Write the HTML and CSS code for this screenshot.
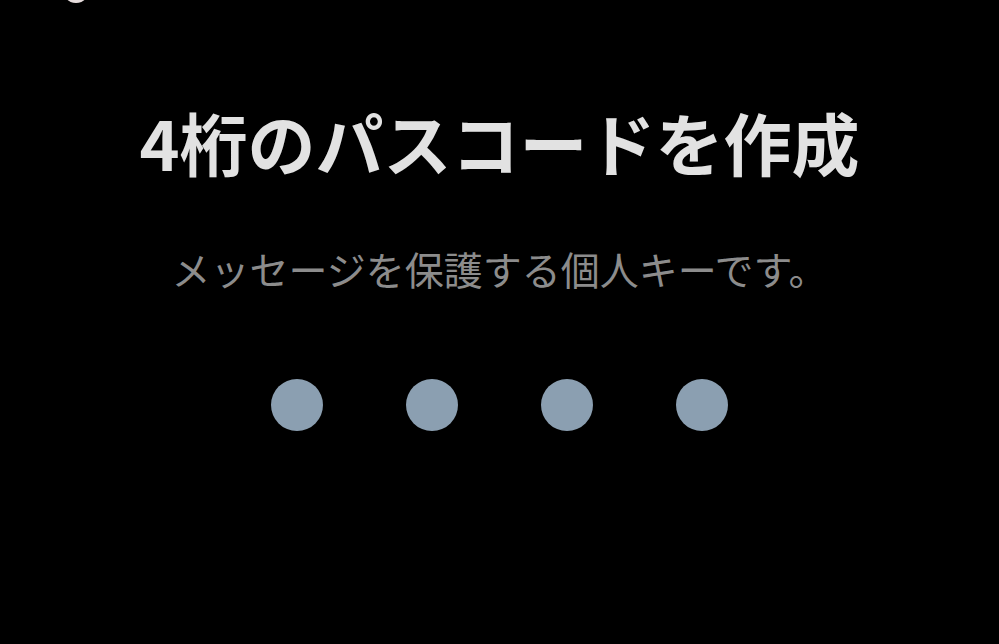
FILE: index.html
```html
<!DOCTYPE html>
<html lang="ja">
<head>
<meta charset="utf-8">
<link rel="stylesheet" href="styles.css">
</head>
<body>
<div class="screen">
  <div class="avatar-edge"></div>
  <h1 class="title">4桁のパスコードを作成</h1>
  <p class="subtitle">メッセージを保護する個人キーです。</p>
  <div class="dots">
    <span class="dot"></span>
    <span class="dot"></span>
    <span class="dot"></span>
    <span class="dot"></span>
  </div>
</div>
</body>
</html>
```
FILE: styles.css
```css
html, body {
  margin: 0;
  padding: 0;
  background: #000;
}
.screen {
  position: relative;
  width: 999px;
  height: 644px;
  overflow: hidden;
  background: #000;
  display: flex;
  flex-direction: column;
  align-items: center;
  font-family: "Noto Sans CJK JP", "Noto Sans", sans-serif;
}
.avatar-edge {
  position: absolute;
  left: 62px;
  top: -26px;
  width: 28px;
  height: 29px;
  border-radius: 50%;
  background: #e6dcdc;
  filter: blur(0.6px);
}
.title {
  margin: 97px 0 0;
  font-size: 68px;
  font-weight: 700;
  line-height: 90px;
  color: #e2e2e2;
  letter-spacing: 0;
}
.subtitle {
  margin: 56px 0 0;
  font-size: 39px;
  font-weight: 400;
  line-height: 50px;
  color: #8c8c8c;
}
.dots {
  margin-top: 86px;
  display: flex;
  gap: 83px;
}
.dot {
  width: 52px;
  height: 52px;
  border-radius: 50%;
  background: #8b9fb1;
}
```
